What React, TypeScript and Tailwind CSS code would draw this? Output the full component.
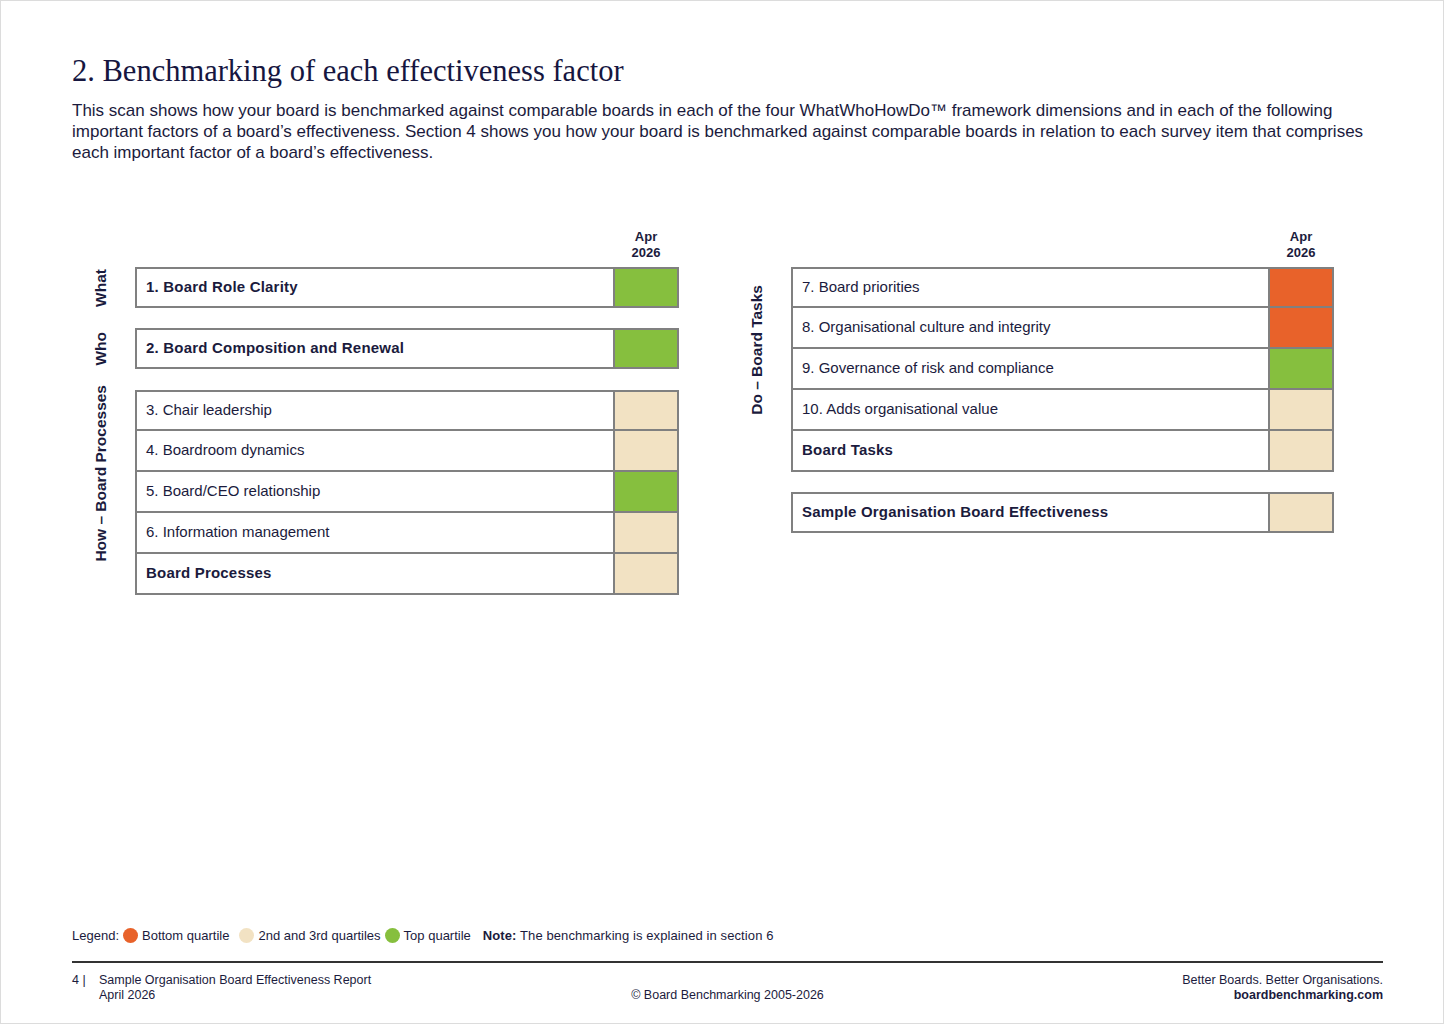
const GREEN = "bg-[#86bf3e]";
const ORANGE = "bg-[#e8622a]";
const BEIGE = "bg-[#f2e2c3]";

type Row = { label: string; bold?: boolean; color: string };

function Table({ rows }: { rows: Row[] }) {
  return (
    <div className="flex-1 border-2 border-[#808080]">
      {rows.map((r, i) => (
        <div
          key={r.label}
          className={`flex ${i > 0 ? "h-[41px] border-t-2 border-[#808080]" : "h-[37px]"}`}
        >
          <div
            className={`flex flex-1 items-center px-[9px] text-[15px] text-[#1b1b3d] ${
              r.bold ? "font-bold tracking-[0.2px]" : ""
            }`}
          >
            {r.label}
          </div>
          <div className={`w-[64px] border-l-2 border-[#808080] ${r.color}`} />
        </div>
      ))}
    </div>
  );
}

function Section({
  label,
  rows,
  labelWidth,
  labelShift = "",
}: {
  label: string;
  rows: Row[];
  labelWidth: string;
  labelShift?: string;
}) {
  return (
    <div className="flex">
      <div className={`flex shrink-0 items-center justify-center ${labelWidth}`}>
        <span
          className={`rotate-180 text-[15.5px] font-bold leading-none text-[#1b1b3d] [writing-mode:vertical-rl] ${labelShift}`}
        >
          {label}
        </span>
      </div>
      <Table rows={rows} />
    </div>
  );
}

function ColumnHeader() {
  return (
    <div className="flex justify-end">
      <div className="w-[66px] text-center text-[13px] font-bold leading-[16px] text-[#1b1b3d]">
        Apr
        <br />
        2026
      </div>
    </div>
  );
}

function Dot({ color }: { color: string }) {
  return <span className={`inline-block h-[15px] w-[15px] rounded-full ${color}`} />;
}

export default function App() {
  return (
    <div
      className="flex h-[1024px] w-[1444px] flex-col border border-[#dcdcdc] bg-white text-[#1b1b3d]"
      style={{ fontFamily: '"Liberation Sans", Arial, sans-serif' }}
    >
      <div className="px-[71px] pt-[50px]">
        <h1 className="font-['Liberation_Serif',serif] text-[30.5px] leading-[40px] text-[#16163f]">
          2. Benchmarking of each effectiveness factor
        </h1>
        <p className="mt-[9px] text-[17px] leading-[21px] text-[#1b1b3d]">
          This scan shows how your board is benchmarked against comparable boards in each of the four
          WhatWhoHowDo™ framework dimensions and in each of the following important factors of a
          board’s effectiveness. Section 4 shows you how your board is benchmarked against comparable
          boards in relation to each survey item that comprises each important factor of a board’s
          effectiveness.
        </p>
      </div>

      <div className="mt-[66px] flex pl-[72px]">
        {/* Left panel */}
        <div className="flex w-[606px] flex-col">
          <div className="pl-[62px]">
            <ColumnHeader />
          </div>
          <div className="mt-[6px]">
            <Section
              label="What"
              labelWidth="w-[56px] mr-[6px]"
              rows={[{ label: "1. Board Role Clarity", bold: true, color: GREEN }]}
            />
          </div>
          <div className="mt-[20px]">
            <Section
              label="Who"
              labelWidth="w-[56px] mr-[6px]"
              rows={[{ label: "2. Board Composition and Renewal", bold: true, color: GREEN }]}
            />
          </div>
          <div className="mt-[21px]">
            <Section
              label="How – Board Processes"
              labelWidth="w-[56px] mr-[6px]"
              labelShift="-translate-y-[19px]"
              rows={[
                { label: "3. Chair leadership", color: BEIGE },
                { label: "4. Boardroom dynamics", color: BEIGE },
                { label: "5. Board/CEO relationship", color: GREEN },
                { label: "6. Information management", color: BEIGE },
                { label: "Board Processes", bold: true, color: BEIGE },
              ]}
            />
          </div>
        </div>

        {/* Right panel */}
        <div className="ml-[62px] flex w-[593px] flex-col">
          <div className="pl-[50px]">
            <ColumnHeader />
          </div>
          <div className="mt-[6px]">
            <Section
              label="Do – Board Tasks"
              labelWidth="w-[32px] mr-[18px]"
              labelShift="-translate-y-[20px]"
              rows={[
                { label: "7. Board priorities", color: ORANGE },
                { label: "8. Organisational culture and integrity", color: ORANGE },
                { label: "9. Governance of risk and compliance", color: GREEN },
                { label: "10. Adds organisational value", color: BEIGE },
                { label: "Board Tasks", bold: true, color: BEIGE },
              ]}
            />
          </div>
          <div className="mt-[20px] pl-[50px]">
            <Table
              rows={[{ label: "Sample Organisation Board Effectiveness", bold: true, color: BEIGE }]}
            />
          </div>
        </div>
      </div>

      <div className="mt-auto px-[71px] pb-[20px]">
        <div className="flex items-center gap-[4px] text-[13px] text-[#1b1b3d]">
          <span>Legend:</span>
          <Dot color={ORANGE} />
          <span className="mr-[6px]">Bottom quartile</span>
          <Dot color={BEIGE} />
          <span>2nd and 3rd quartiles</span>
          <Dot color={GREEN} />
          <span className="mr-[8px]">Top quartile</span>
          <span className="tracking-[0.1px]">
            <span className="font-bold">Note:</span> The benchmarking is explained in section 6
          </span>
        </div>
        <div className="mt-[16px] h-[2px] w-[1311px] bg-[#333333]" />
        <div className="mt-[10px] flex w-[1311px] items-start text-[12.5px] leading-[15px] text-[#1b1b3d]">
          <div className="flex w-[420px]">
            <span className="w-[27px]">4 |</span>
            <div>
              <div>Sample Organisation Board Effectiveness Report</div>
              <div>April 2026</div>
            </div>
          </div>
          <div className="flex-1 pt-[15px] text-center">© Board Benchmarking 2005-2026</div>
          <div className="w-[420px] text-right">
            <div>Better Boards. Better Organisations.</div>
            <div className="font-bold">boardbenchmarking.com</div>
          </div>
        </div>
      </div>
    </div>
  );
}
